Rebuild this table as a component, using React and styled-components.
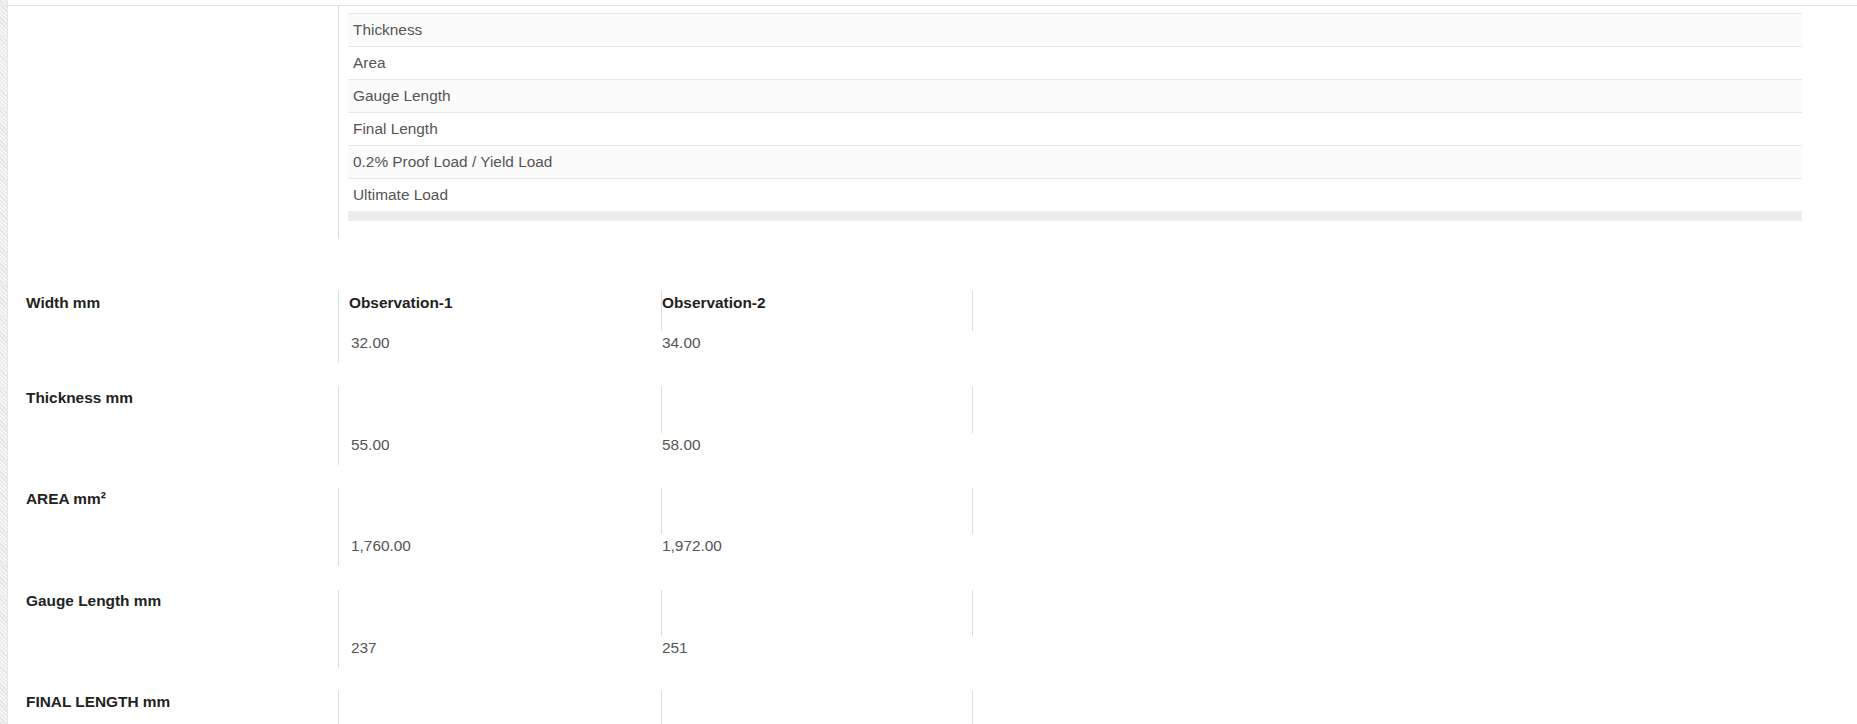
import React from "react";
import styled, { createGlobalStyle } from "styled-components";

const GlobalStyle = createGlobalStyle`
  html, body {
    margin: 0;
    padding: 0;
    background: #ffffff;
  }
  body {
    font-family: "Liberation Sans", Arial, sans-serif;
    font-size: 15.4px;
    color: #555555;
  }
`;

const topRows = [
  "Thickness",
  "Area",
  "Gauge Length",
  "Final Length",
  "0.2% Proof Load / Yield Load",
  "Ultimate Load",
];

const observations = [
  { label: "Width mm", head: true, values: ["32.00", "34.00"] },
  { label: "Thickness mm", values: ["55.00", "58.00"] },
  { label: "AREA mm²", values: ["1,760.00", "1,972.00"] },
  { label: "Gauge Length mm", values: ["237", "251"] },
  { label: "FINAL LENGTH mm", values: ["", ""] },
];

const App = () => {
  return (
    <>
      <GlobalStyle />
      <Page>
        <Stripe />
        <Main>
          <TopSection>
            <div />
            <TablePane>
              <ParamTable>
                {topRows.map((name, i) => (
                  <ParamRow key={name} $odd={i % 2 === 0}>
                    {name}
                  </ParamRow>
                ))}
                <TableFoot />
              </ParamTable>
            </TablePane>
          </TopSection>

          <ObsList>
            {observations.map((row) => (
              <ObsRow key={row.label}>
                <ObsLabel $head={row.head}>{row.label}</ObsLabel>
                <FirstCol>
                  <ObsHead $head={row.head} $pad="10px">
                    {row.head ? "Observation-1" : ""}
                  </ObsHead>
                  <ObsValue $pad="12px">{row.values[0]}</ObsValue>
                </FirstCol>
                <PlainCol>
                  <ObsHead $head={row.head} $lined $pad="0px">
                    {row.head ? "Observation-2" : ""}
                  </ObsHead>
                  <ObsValue $pad="1px">{row.values[1]}</ObsValue>
                </PlainCol>
                <PlainCol>
                  <ObsHead $head={row.head} $lined $pad="0px" />
                </PlainCol>
              </ObsRow>
            ))}
          </ObsList>
        </Main>
      </Page>
    </>
  );
};

const Page = styled.div`
  display: flex;
  min-height: 100vh;
`;

const Stripe = styled.div`
  width: 7px;
  flex-shrink: 0;
  background-color: #eeeeee;
  background-image: repeating-linear-gradient(
    45deg,
    #e4e4e4 0px,
    #e4e4e4 1px,
    #f4f4f4 1px,
    #f4f4f4 3px
  );
  border-right: 1px solid #e6e6e6;
`;

const Main = styled.div`
  flex: 1;
  margin-top: 5px;
  border-top: 1px solid #e2e2e2;
`;

const TopSection = styled.div`
  display: grid;
  grid-template-columns: 330px 1fr;
`;

const TablePane = styled.div`
  border-left: 1px solid #dddddd;
  padding: 7px 55px 18px 9px;
`;

const ParamTable = styled.div`
  display: flex;
  flex-direction: column;
`;

const ParamRow = styled.div`
  height: 32px;
  display: flex;
  align-items: center;
  padding-left: 5px;
  border-top: 1px solid #e6e6e6;
  background: ${(p) => (p.$odd ? "#fbfbfb" : "#ffffff")};
  color: #555555;
  white-space: nowrap;
`;

const TableFoot = styled.div`
  height: 10px;
  background: #ececec;
`;

const ObsList = styled.div`
  display: flex;
  flex-direction: column;
  gap: 23.6px;
  padding-top: 52px;
`;

const ObsRow = styled.div`
  display: grid;
  grid-template-columns: 330px 323px 311px 1fr;
  align-items: start;
`;

const ObsLabel = styled.div`
  padding: ${(p) => (p.$head ? "3px" : "2px")} 0 0 18px;
  font-weight: 700;
  color: #222222;
  line-height: 18px;
  white-space: nowrap;
`;

const FirstCol = styled.div`
  border-left: 1px solid #dddddd;
`;

const PlainCol = styled.div``;

const ObsHead = styled.div`
  height: ${(p) => (p.$head ? "40px" : "46px")};
  box-sizing: border-box;
  padding: 3px 0 0 ${(p) => p.$pad};
  border-left: ${(p) => (p.$lined ? "1px solid #dddddd" : "none")};
  font-weight: 700;
  color: #222222;
  line-height: 18px;
  white-space: nowrap;
`;

const ObsValue = styled.div`
  height: 32px;
  box-sizing: border-box;
  padding: 3px 0 0 ${(p) => p.$pad};
  line-height: 18px;
  color: #555555;
`;

export default App;
